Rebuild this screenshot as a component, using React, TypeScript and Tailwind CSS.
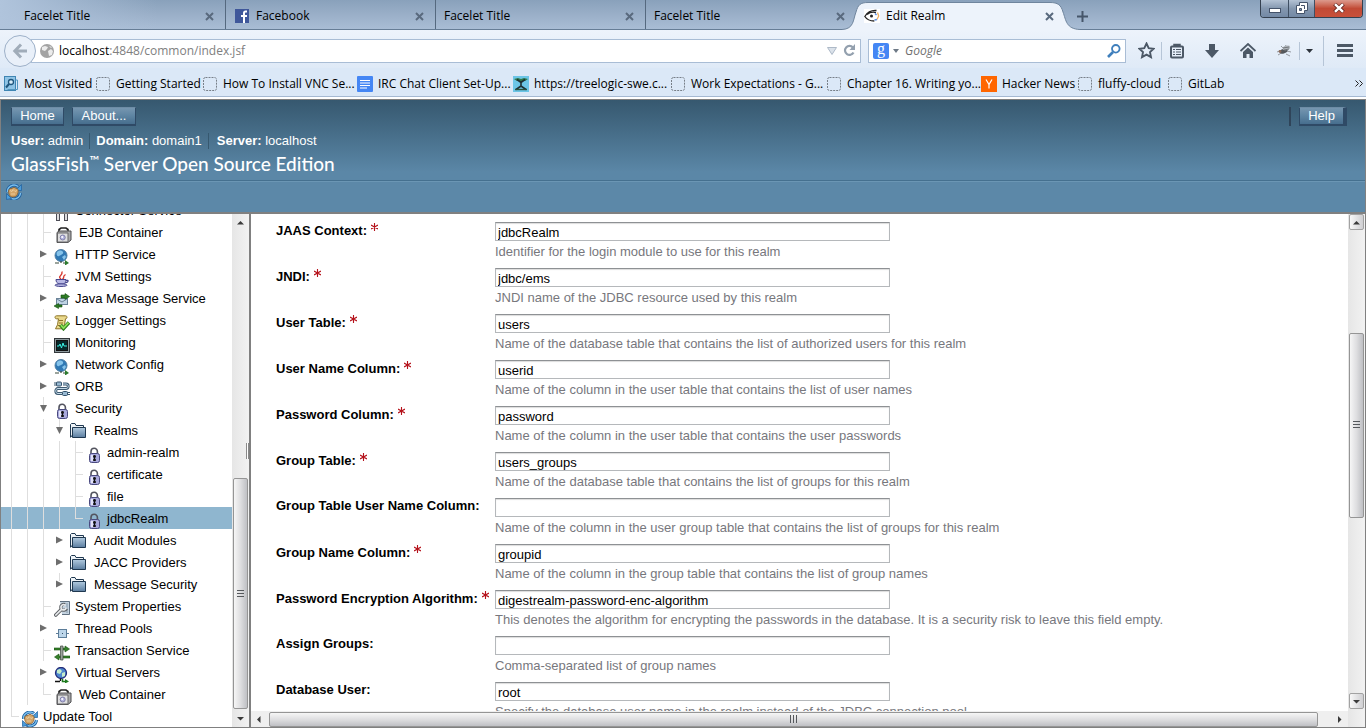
import React from "react";

const UI = "font-['Open_Sans','Noto_Sans',sans-serif]";

function TabClose({ label }: { label: string }) {
  return (
    <button type="button" aria-label={label} className="flex h-4 w-4 items-center justify-center">
      <svg width="9" height="9" viewBox="0 0 9 9" stroke="#596a7e" strokeWidth="2">
        <path d="M1 1l7 7M8 1l-7 7" />
      </svg>
    </button>
  );
}

function BackgroundTab({ title, icon, className }: { title: string; icon?: React.ReactNode; className: string }) {
  return (
    <div className={`flex h-full shrink-0 items-center pt-[3px] ${className}`}>
      {icon}
      <button type="button" className="flex-1 text-left">{title}</button>
      <TabClose label={`Close ${title}`} />
    </div>
  );
}

function GlassFishIcon() {
  return (
    <svg width="16" height="14" viewBox="0 0 16 14" className="shrink-0">
      <rect width="16" height="14" fill="#fff" />
      <path d="M12.500 1.500C7 1 3 4 .8 7.500c2 3 5 4.500 9.500 4.500M3 5.500c3-2.500 6-2.800 9-2" fill="none" stroke="#222" strokeWidth="1.300" />
      <circle cx="7.500" cy="7" r="1.500" fill="#222" />
      <path d="M13.500 3.500l1.200 3.500-1.700 3.500" fill="none" stroke="#f0b064" strokeWidth="1.300" />
      <path d="M11 4.500l1.500 1.500M10.500 11l2.500-.5" stroke="#5a8ee0" strokeWidth="1.500" />
    </svg>
  );
}

function TabStrip() {
  return (
    <div className="flex h-[30px] shrink-0 items-stretch border-b border-[#667d96] bg-linear-to-b from-[#89a1bb] via-[#9aafc8] to-[#a9bdd5]">
      <BackgroundTab title="Facelet Title" className="w-[226px] border-r border-[#55697f] bg-linear-to-r from-[#b0c4dc] to-transparent to-70% pr-2 pl-6" />
      <BackgroundTab
        title="Facebook"
        className="w-[210px] gap-[7px] border-r border-[#55697f] pr-2 pl-[9px]"
        icon={
          <svg width="14" height="14" viewBox="0 0 14 14">
            <rect width="14" height="14" fill="#3f579a" />
            <path d="M12 2.500h-1.500c-1 0-1.500.5-1.500 1.500v10M6 7h6" stroke="#fff" strokeWidth="2" fill="none" />
          </svg>
        }
      />
      <BackgroundTab title="Facelet Title" className="w-[210px] border-r border-[#55697f] pr-2 pl-2" />
      <BackgroundTab title="Facelet Title" className="w-[208px] pr-[6px] pl-2" />
      <div className="relative z-10 flex w-[211px] shrink-0 items-center pt-[3px] pr-2 pl-[10px]">
        <svg width="240" height="31" viewBox="0 0 240 31" className="absolute -left-3 top-0">
          <path d="M0 29.500C12 29 11 20 14 12C16 5 18 2.500 26 2.500H208C216 2.500 219 5 221 12C224 20 224 29 238 29.500V31H0Z" fill="#edf3fb" />
          <path d="M0 29.500C12 29 11 20 14 12C16 5 18 2.500 26 2.500H208C216 2.500 219 5 221 12C224 20 224 29 238 29.500" fill="none" stroke="#6f859d" />
        </svg>
        <div className="relative flex flex-1 items-center gap-[6px]">
          <GlassFishIcon />
          <button type="button" className="flex-1 text-left">Edit Realm</button>
          <TabClose label="Close Edit Realm" />
        </div>
      </div>
      <button type="button" aria-label="New tab" className="ml-3 flex items-center pt-[3px]">
        <svg width="11" height="11" viewBox="0 0 11 11" stroke="#46566a" strokeWidth="2"><path d="M5.500 0v11M0 5.500h11" /></svg>
      </button>
      <div className="mr-[3px] ml-auto flex h-[18px] overflow-hidden rounded-b border border-t-0 border-[#34404f]">
        <button type="button" aria-label="Minimize" className="flex w-7 items-end justify-center border-r border-[#3f4f63] bg-linear-to-b from-[#b3c2d4] via-[#8497af] to-[#7389a5] pb-1">
          <span className="h-[5px] w-3 border border-[#44536a] bg-white" />
        </button>
        <button type="button" aria-label="Restore" className="flex w-[26px] items-center justify-center border-r border-[#3f4f63] bg-linear-to-b from-[#b3c2d4] via-[#8497af] to-[#7389a5] pb-[2px]">
          <svg width="12" height="12" viewBox="0 0 12 12"><path d="M3.500 .5h8v8h-3v3h-8v-8h3z" fill="#fff" stroke="#44536a" /><path d="M3.500 6.500h2v2h-2z" fill="#8497af" stroke="#44536a" /><path d="M5 3.500h3.500V7" fill="none" stroke="#44536a" /></svg>
        </button>
        <button type="button" aria-label="Close window" className="flex w-[47px] items-center justify-center bg-linear-to-b from-[#dc9a8d] via-[#c14a35] to-[#c8503a] pb-[2px]">
          <svg width="12" height="10" viewBox="0 0 12 10"><path d="M1.500 1l9 8M10.500 1l-9 8" stroke="#6b2b24" strokeWidth="4" /><path d="M2 1.200l8 7.600M10 1.200l-8 7.600" stroke="#fff" strokeWidth="2.400" /></svg>
        </button>
      </div>
    </div>
  );
}

function NavBar() {
  return (
    <div className="flex h-[38px] shrink-0 items-center bg-linear-to-b from-[#edf3fb] to-[#dfeaf7] pt-[3px] pl-1">
      <button type="button" aria-label="Back" className="z-10 -mr-[5px] flex h-8 w-8 shrink-0 items-center justify-center rounded-full border border-[#9db0c8] bg-[#e9f0f9]">
        <svg width="16" height="16" viewBox="0 0 16 16" fill="none" stroke="#a0acb9" strokeWidth="3"><path d="M9 1.500L2.800 8L9 14.500M3 8h12" /></svg>
      </button>
      <div className="flex h-6 flex-1 items-center border border-[#a9bdd5] bg-white pr-1 pl-2">
        <svg width="14" height="14" viewBox="0 0 14 14" className="shrink-0">
          <circle cx="7" cy="7" r="7" fill="#a3a3a3" />
          <path d="M2 3l3-1 3 1-1 2-2 2-3-1zM8 7l3-2 2 2-1 4-3 1zM9 2l3 1-1 1z" fill="#ececec" />
        </svg>
        <label htmlFor="address" className="ml-[5px]">localhost</label>
        <input id="address" defaultValue=":4848/common/index.jsf" className="h-5 w-0 flex-1 bg-transparent text-[#808080] outline-none" />
        <svg width="10" height="8" viewBox="0 0 10 8"><path d="M.5 .5h9L5 7.500z" fill="#dbe2ea" stroke="#adb9c7" /></svg>
        <button type="button" aria-label="Reload" className="ml-[6px]">
          <svg width="13" height="13" viewBox="0 0 13 13"><path d="M10.500 8.500a4.500 4.500 0 1 1-.6-5" fill="none" stroke="#93a0ae" strokeWidth="2.200" /><path d="M12 0v6H6.500z" fill="#93a0ae" /></svg>
        </button>
      </div>
      <div className="ml-[7px] flex h-6 w-[258px] shrink-0 items-center border border-[#a9bdd5] bg-white pr-1 pl-1">
        <span className="flex h-4 w-4 shrink-0 items-center justify-center rounded-[2px] bg-[#4486f4] pb-[3px] font-['Liberation_Serif',serif] text-base leading-4 text-white">g</span>
        <svg width="7" height="4" viewBox="0 0 7 4" className="mx-1 shrink-0"><path d="M0 0h6L3 4z" fill="#6d7986" /></svg>
        <input aria-label="Search" placeholder="Google" className="ml-px h-5 w-0 flex-1 bg-transparent placeholder-[#6f6f6f] italic outline-none" />
        <button type="button" aria-label="Go">
          <svg width="14" height="14" viewBox="0 0 14 14" fill="none" stroke="#3f7fbc"><circle cx="8.800" cy="4.800" r="3.800" strokeWidth="1.800" /><path d="M6 8L1 13" strokeWidth="2.600" /></svg>
        </button>
      </div>
      <div className="flex shrink-0 items-center pl-3 text-[#4c5866]">
        <button type="button" aria-label="Bookmark this page">
          <svg width="17" height="17" viewBox="0 0 17 17"><path d="M8.500 1.500l2.200 4.600 5 .6-3.700 3.400 1 5-4.500-2.500-4.500 2.500 1-5L1.300 6.700l5-.6z" fill="none" stroke="currentColor" strokeWidth="1.900" /></svg>
        </button>
        <span className="mx-[6px] h-[18px] w-px bg-[#b6c5d7]" />
        <button type="button" aria-label="Bookmarks menu" className="ml-px">
          <svg width="16" height="16" viewBox="0 0 16 16"><rect x="2" y="3.500" width="12" height="11" rx="1" fill="none" stroke="currentColor" strokeWidth="2" /><path d="M5 3V1.500h6V3" fill="currentColor" stroke="currentColor" strokeWidth="1.500" /><path d="M4 6.500h2M4 9h2M4 11.500h2M7 6.500h5M7 9h5M7 11.500h5" stroke="currentColor" strokeWidth="1.200" /></svg>
        </button>
        <button type="button" aria-label="Downloads" className="ml-5">
          <svg width="14" height="14" viewBox="0 0 14 14"><path d="M4 0h6v6h4L7 14 0 6h4z" fill="currentColor" /></svg>
        </button>
        <button type="button" aria-label="Home page" className="ml-[21px]">
          <svg width="16" height="15" viewBox="0 0 16 15"><path d="M.5 8L8 1l7.500 7" fill="none" stroke="currentColor" strokeWidth="1.800" /><path d="M3 9l5-4.500L13 9v6H9.500v-4h-3v4H3z" fill="currentColor" /></svg>
        </button>
        <button type="button" aria-label="Firebug" className="ml-5">
          <svg width="16" height="13" viewBox="0 0 16 13"><path d="M1 8l5-2M2 11l5-3M5 2l3 3M10 10l4 2M11 7l4 1M9 3l1-2" stroke="#8b8f94" strokeWidth=".9" /><ellipse cx="7.500" cy="7" rx="4" ry="2.300" fill="#54585c" transform="rotate(-20 8 6.500)" /><ellipse cx="10.500" cy="3.800" rx="3.800" ry="2.200" fill="#b0b6bc" transform="rotate(-15 11 4)" /><path d="M7 4l6-1M8 6l5-1" stroke="#5f6367" strokeWidth=".8" /><circle cx="4" cy="7.500" r="1.400" fill="#8a6a5a" /></svg>
        </button>
        <span className="ml-[7px] h-[18px] w-px bg-[#b6c5d7]" />
        <button type="button" aria-label="Firebug options" className="ml-[6px]"><svg width="7" height="4" viewBox="0 0 7 4"><path d="M0 0h7L3.500 4z" fill="#2c333b" /></svg></button>
        <span className="ml-[10px] h-[30px] w-px bg-[#b6c5d7]" />
        <button type="button" aria-label="Open menu" className="mr-[13px] ml-[13px]">
          <svg width="16" height="13" viewBox="0 0 16 13" stroke="currentColor" strokeWidth="3"><path d="M0 1.500h16M0 6.500h16M0 11.500h16" /></svg>
        </button>
      </div>
    </div>
  );
}

const blankIcon = (
  <svg width="16" height="16" viewBox="0 0 16 16"><rect x="1.500" y="1.500" width="13" height="13" rx="2" fill="none" stroke="#777f88" strokeDasharray="2 1" /></svg>
);

const bookmarks: { title: string; width: string; icon: React.ReactNode }[] = [
  {
    title: "Most Visited", width: "w-[92px]",
    icon: <svg width="16" height="16" viewBox="0 0 16 16"><rect x="1.500" y=".5" width="11" height="14" fill="#8fc4e6" stroke="#3f85b3" /><path d="M12.500 4h2v9.500h-10" fill="none" stroke="#5497c0" /><circle cx="8" cy="6" r="2.500" fill="#d9eefa" stroke="#1f567e" strokeWidth="1.300" /><path d="M6 8l-3 3.500" stroke="#1f567e" strokeWidth="2" /></svg>,
  },
  { title: "Getting Started", width: "w-[107px]", icon: blankIcon },
  { title: "How To Install VNC Se...", width: "w-[155px]", icon: blankIcon },
  {
    title: "IRC Chat Client Set-Up...", width: "w-[156px]",
    icon: <svg width="16" height="16" viewBox="0 0 16 16"><rect width="16" height="16" rx="1" fill="#4486f4" /><path d="M3 4.500h10M3 7h10M3 9.500h10M3 12h7" stroke="#fff" strokeWidth="1.200" /></svg>,
  },
  {
    title: "https://treelogic-swe.c...", width: "w-[157px]",
    icon: <svg width="16" height="16" viewBox="0 0 16 16"><rect width="16" height="16" fill="#6cc5e6" /><path d="M1 3l4-1 3 1 3-1 4 1-3 2H4z" fill="#2f7a4a" /><path d="M4 3.500l4 3 4-3M8 5v6M3 13.500l5-3.500 5 3.500" fill="none" stroke="#1f2f33" strokeWidth="1.600" /><path d="M2 13.500h12" stroke="#27503c" strokeWidth="1.400" /></svg>,
  },
  { title: "Work Expectations - G...", width: "w-[156px]", icon: blankIcon },
  { title: "Chapter 16. Writing yo...", width: "w-[155px]", icon: blankIcon },
  {
    title: "Hacker News", width: "w-[96px]",
    icon: <svg width="16" height="16" viewBox="0 0 16 16"><rect width="16" height="16" fill="#ff6600" /><path d="M5 3.500l3 5 3-5M8 8.500v4" fill="none" stroke="#fff" strokeWidth="1.200" /></svg>,
  },
  { title: "fluffy-cloud", width: "w-[90px]", icon: blankIcon },
  { title: "GitLab", width: "w-[90px]", icon: blankIcon },
];

function BookmarksBar() {
  return (
    <nav className="flex h-[29px] shrink-0 items-center border-b border-[#a5b9d2] bg-[#dbe8f7] pt-[3px] pl-[3px]">
      {bookmarks.map((b) => (
        <a key={b.title} href="#bookmark" className={`flex shrink-0 items-center gap-[5px] whitespace-nowrap ${b.width}`}>
          <span className="shrink-0">{b.icon}</span>
          {b.title}
        </a>
      ))}
      <button type="button" aria-label="More bookmarks" className="mr-[3px] ml-auto">
        <svg width="8" height="7" viewBox="0 0 8 7" fill="none" stroke="#222"><path d="M.5 .5l3 3-3 3M4.500 .5l3 3-3 3" /></svg>
      </button>
    </nav>
  );
}

function UpdateIcon() {
  return (
    <svg width="16" height="16" viewBox="0 0 16 16">
      <path d="M1.500 8A6.500 6.500 0 0 1 12 2.500M14.500 9A6.500 6.500 0 0 1 4 13.500" fill="none" stroke="#1d5f9f" strokeWidth="3" />
      <path d="M1.500 8A6.500 6.500 0 0 1 12 2.500M14.500 9A6.500 6.500 0 0 1 4 13.500" fill="none" stroke="#7cc0ee" strokeWidth="1.400" />
      <path d="M15.500 .5v6h-6zM.5 15.500v-6l5 5z" fill="#4b9bd8" stroke="#1d5f9f" strokeWidth=".7" />
      <path d="M2.500 7c.5-2 2-3 3.500-2.500 1-1.500 3-1.500 4 0 2 0 2.500 1.500 2 4s-2 4.500-5 4.500-4-2-4.500-6z" fill="#d4a568" stroke="#87602f" strokeWidth=".8" />
      <path d="M4 6.500l2 1 1-2 2 2 2-1M5 10h4" fill="none" stroke="#efd3a4" strokeWidth=".8" />
    </svg>
  );
}

const mastButton = "h-[19px] border border-b-2 border-[#2f4a66] border-t-[#6e8ca5] bg-linear-to-b from-[#7696b0] via-[#5d84a2] to-[#476e8e] text-[13px] leading-4 text-white";

function Masthead() {
  return (
    <header className="shrink-0 border-b-2 border-[#808080] bg-[#5c88a8] text-[13px] leading-4 text-white">
      <div className="flex h-[81px] flex-col border-b border-[#45708f] bg-linear-to-b from-[#36586f] via-[#4a728e] via-50% to-[#5b87a7] to-90% pt-[7px] pl-[10px]">
        <div className="flex items-start gap-2">
          <button type="button" className={`${mastButton} w-[53px]`}>Home</button>
          <button type="button" className={`${mastButton} w-16`}>About...</button>
          <div className="mr-[18px] ml-auto flex items-start gap-2">
            <span className="h-[19px] w-[2px] bg-[#2f4459]" />
            <button type="button" className={`${mastButton} w-12 border-r-4`}>Help</button>
          </div>
        </div>
        <div className="mt-[7px] flex">
          <span className="pr-[6px]"><b>User:</b> admin</span>
          <span className="border-l border-[#36586f] px-[6px]"><b>Domain:</b> domain1</span>
          <span className="border-l border-[#36586f] px-2"><b>Server:</b> localhost</span>
        </div>
        <h1 className="mt-[3px] font-[Lato,'Open_Sans',sans-serif] text-[19px] leading-6 font-medium whitespace-nowrap">
          GlassFish<sup className="-top-[6px] text-[13px] leading-none">™</sup> Server Open Source Edition
        </h1>
      </div>
      <div className="flex h-[31px] items-start border-t border-[#6b96b4] pt-[2px] pl-[5px]">
        <button type="button" aria-label="Updates available"><UpdateIcon /></button>
      </div>
    </header>
  );
}

const GlobeIcon = () => (
  <svg width="16" height="16" viewBox="0 0 16 16">
    <circle cx="7" cy="6.500" r="6" fill="#2f78b4" stroke="#4f7ea3" />
    <path d="M3 3c2-2 5-2 6 0S7 6 5 7 2 5 3 3zM8 8l3-2 1 2-2 3z" fill="#86c3ea" />
    <path d="M1 14h4M9 14h3M7 12v2" stroke="#3b4a3b" strokeWidth="1.200" /><path d="M11 11l4 3-4 2.500z" fill="#2d7a2d" />
  </svg>
);
const LockIcon = () => (
  <svg width="16" height="16" viewBox="0 0 16 16">
    <path d="M5 8V4.500a3.200 3.200 0 0 1 6.400 0V8" fill="none" stroke="#53545f" strokeWidth="1.600" />
    <rect x="3.500" y="6.500" width="10" height="9" rx="2" fill="#a9a9dc" stroke="#4a4a80" />
    <path d="M5 8h2v6H5z" fill="#e3e3f7" /><circle cx="8.500" cy="9.500" r="1.400" fill="#111" /><path d="M8.500 9v5M7 13h3" stroke="#111" strokeWidth="1.300" />
  </svg>
);
const FolderIcon = () => (
  <svg width="16" height="16" viewBox="0 0 16 16">
    <defs><linearGradient id="folder" x2="0" y2="1"><stop stopColor="#b1cadf" /><stop offset="1" stopColor="#5b7d9f" /></linearGradient></defs>
    <path d="M.5 14V1.500L1.500 .5h3.500l1 2h7.500v2" fill="#eef3f7" stroke="#1f3850" />
    <path d="M.5 14.500L2.500 12M2.500 14.500v-10h13v10z" fill="url(#folder)" stroke="#1f3850" />
  </svg>
);
const ContainerIcon = () => (
  <svg width="16" height="16" viewBox="0 0 16 16">
    <path d="M3 5V2.500L5 1h5l2 1.500V5" fill="none" stroke="#222" strokeWidth="1.600" />
    <path d="M1 5.500l2-1.500h12v9l-3 2.500H1z" fill="#a9a9ab" stroke="#4c4c4e" /><path d="M1.500 6h10.500v9H1.500z" fill="#dededf" stroke="#68686a" />
    <circle cx="6.700" cy="10.500" r="2.500" fill="#b5b5e0" stroke="#8080a8" /><circle cx="6.200" cy="10" r="1" fill="#fff" />
  </svg>
);
const ConnectorIcon = () => (
  <svg width="16" height="16" viewBox="0 0 16 16">
    <path d="M2 9V4l3-3h6l3 3v5" fill="none" stroke="#4c4c55" strokeWidth="2" />
    <rect x="2.500" y="8.500" width="3" height="7" fill="#dededf" stroke="#4c4c55" /><rect x="10.500" y="8.500" width="3" height="7" fill="#dededf" stroke="#4c4c55" />
  </svg>
);
const JavaIcon = () => (
  <svg width="16" height="16" viewBox="0 0 16 16">
    <path d="M7 8c-4-3 2-3 1-7.500M8.500 8c3-2-1-2 3-4.500" fill="none" stroke="#d8362b" strokeWidth="1.400" />
    <path d="M2 8.500h10c0 3-1 4-3 4.500H5c-2-1-3-2-3-4.500z" fill="#b7b7e4" stroke="#45458c" /><path d="M12 9.500c3-1 3 2-1 2.500" fill="none" stroke="#45458c" strokeWidth="1.200" /><ellipse cx="7" cy="14.200" rx="6" ry="1.300" fill="#b7b7e4" stroke="#45458c" />
  </svg>
);
const MessageIcon = () => (
  <svg width="16" height="16" viewBox="0 0 16 16">
    <rect x="2.500" y="5.500" width="11" height="6" fill="#bfd3e4" stroke="#6c8499" /><path d="M3 6l5 3 5-3" fill="none" stroke="#6c8499" />
    <path d="M7 2h4V.5L15.500 3.500 11 6.500V5H7z" fill="#2e7a25" stroke="#15520f" strokeWidth=".6" /><path d="M8 12H4.500v-1.500L0 13l4.500 2.500V14H8z" fill="#2e7a25" stroke="#15520f" strokeWidth=".6" />
  </svg>
);
const LoggerIcon = () => (
  <svg width="16" height="16" viewBox="0 0 16 16">
    <path d="M2.500 .8h9c2 0 2 3 0 3l-1 6-1 4h-8l2-4 1-6h-2c-2 0-2-3 0-3z" fill="#ead98c" stroke="#8c7427" /><path d="M5 5.500h4M5 8h4M4 10.500h4" stroke="#8c7427" />
    <path d="M6.500 10l3 3.500L15 7.500" fill="none" stroke="#2d7a1d" strokeWidth="3.600" /><path d="M6.800 10.200l2.700 3 5-5.500" fill="none" stroke="#8be057" strokeWidth="1.800" />
  </svg>
);
const MonitorIcon = () => (
  <svg width="16" height="16" viewBox="0 0 16 16">
    <rect x=".5" y="1.500" width="15" height="14" fill="#8f9b9f" stroke="#33383b" /><rect x="2.500" y="3.500" width="11" height="10" fill="#06292b" stroke="#111" /><path d="M3 9h2l1-2 1.500 4L9 6l1 3h3" fill="none" stroke="#3af1e4" />
  </svg>
);
const OrbIcon = () => (
  <svg width="16" height="16" viewBox="0 0 16 16">
    <path d="M9 3h3c3 0 3 4.500 0 4.500H4c-3 0-3 5 0 5h4" fill="none" stroke="#3e5b72" strokeWidth="2.800" /><path d="M9 3h3c3 0 3 4.500 0 4.500H4c-3 0-3 5 0 5h4" fill="none" stroke="#c4d9e8" />
    <path d="M0 2h3M0 4h3M13 11.500h3M13 13.500h3" stroke="#35526a" /><rect x="2.500" y="1" width="5" height="4" rx="1" fill="#98b9d2" stroke="#35526a" /><rect x="8.500" y="10.500" width="5" height="4" rx="1" fill="#98b9d2" stroke="#35526a" />
  </svg>
);
const WrenchIcon = () => (
  <svg width="16" height="16" viewBox="0 0 16 16">
    <path d="M6 .5h9.500v13H8" fill="#c4d3e0" stroke="#5f6f7f" /><path d="M13 2v10" stroke="#8698a8" />
    <path d="M1.800 14L7 8.800" stroke="#5f6367" strokeWidth="3.600" strokeLinecap="round" /><path d="M11 3.500a3 3 0 1 0 1.500 4" fill="none" stroke="#5f6367" strokeWidth="3.200" /><path d="M1.800 14L7.500 8.300M10.800 4a2.600 2.600 0 1 0 1.200 3.200" fill="none" stroke="#e9ebed" strokeWidth="1.700" strokeLinecap="round" />
  </svg>
);
const ThreadIcon = () => (
  <svg width="16" height="16" viewBox="0 0 16 16"><path d="M2 10.500h13" stroke="#5c7d99" /><rect x="4.500" y="6.500" width="8" height="8" fill="#bdd6ea" stroke="#5c7d99" /><path d="M8 10h1v1H8z" fill="#35526a" /></svg>
);
const TransactionIcon = () => (
  <svg width="16" height="16" viewBox="0 0 16 16">
    <path d="M0 3h11V1l4.500 3L11 7V5H0zM16 11H5V9L.5 12 5 15v-2h11z" fill="#37812c" stroke="#15520f" strokeWidth=".6" /><path d="M6.500 1H9v14H6.500z" fill="#9aa29a" stroke="#3e453e" strokeWidth=".7" />
  </svg>
);
const ServerIcon = () => (
  <svg width="16" height="16" viewBox="0 0 16 16">
    <circle cx="7" cy="6" r="5.500" fill="#4e87cf" stroke="#242d7a" strokeWidth="1.300" /><path d="M3 3l3-1 2 2-2 3-3-1zM8 6l3-1v4l-3 1z" fill="#c5edcb" />
    <path d="M6.500 11.500V14M1 14.500h5" stroke="#111" strokeWidth="1.400" /><path d="M8.500 12v2.500h3" fill="none" stroke="#1d7a1d" strokeWidth="1.500" /><path d="M11 12l4 2.500-4 2z" fill="#1d7a1d" />
  </svg>
);

type Cell = "line" | "tee" | "end" | "right" | "down" | "rightTop";

function Guide({ kind }: { kind: Cell }) {
  const stroke = "#dedede";
  return (
    <svg width="16" height="22" viewBox="0 0 16 22" className="shrink-0">
      {(kind === "line" || kind === "tee") && <path d="M8.500 0v22" stroke={stroke} />}
      {kind === "end" && <path d="M8.500 0v11.500" stroke={stroke} />}
      {(kind === "tee" || kind === "end") && <path d="M8 11.500h9" stroke={stroke} />}
      {(kind === "down" || kind === "rightTop") && <path d="M8.500 0v8" stroke={stroke} />}
      {(kind === "right" || kind === "rightTop") && <path d="M5 7.500l7 3.500-7 3.500z" fill="#6e6e6e" />}
      {kind === "down" && <path d="M5 8h7l-3.500 7z" fill="#6e6e6e" />}
    </svg>
  );
}

interface Node { text: string; cells: Cell[]; Icon: React.ComponentType; box?: string; selected?: boolean }
const L: Cell = "line";
const wide = "w-7 pl-[5px]";
const folder = "w-[27px] pl-[3px] pb-[2px]";

const tree: Node[] = [
  { text: "Connector Service", cells: [L, L, "tee"], Icon: ConnectorIcon },
  { text: "EJB Container", cells: [L, L, "tee"], Icon: ContainerIcon, box: wide },
  { text: "HTTP Service", cells: [L, L, "right"], Icon: GlobeIcon },
  { text: "JVM Settings", cells: [L, L, "tee"], Icon: JavaIcon },
  { text: "Java Message Service", cells: [L, L, "right"], Icon: MessageIcon },
  { text: "Logger Settings", cells: [L, L, "tee"], Icon: LoggerIcon },
  { text: "Monitoring", cells: [L, L, "tee"], Icon: MonitorIcon },
  { text: "Network Config", cells: [L, L, "right"], Icon: GlobeIcon },
  { text: "ORB", cells: [L, L, "right"], Icon: OrbIcon },
  { text: "Security", cells: [L, L, "down"], Icon: LockIcon },
  { text: "Realms", cells: [L, L, L, "down"], Icon: FolderIcon, box: folder },
  { text: "admin-realm", cells: [L, L, L, L, "tee"], Icon: LockIcon },
  { text: "certificate", cells: [L, L, L, L, "tee"], Icon: LockIcon },
  { text: "file", cells: [L, L, L, L, "tee"], Icon: LockIcon },
  { text: "jdbcRealm", cells: [L, L, L, L, "end"], Icon: LockIcon, selected: true },
  { text: "Audit Modules", cells: [L, L, L, "right"], Icon: FolderIcon, box: folder },
  { text: "JACC Providers", cells: [L, L, L, "right"], Icon: FolderIcon, box: folder },
  { text: "Message Security", cells: [L, L, L, "rightTop"], Icon: FolderIcon, box: folder },
  { text: "System Properties", cells: [L, L, "tee"], Icon: WrenchIcon },
  { text: "Thread Pools", cells: [L, L, "right"], Icon: ThreadIcon },
  { text: "Transaction Service", cells: [L, L, "tee"], Icon: TransactionIcon },
  { text: "Virtual Servers", cells: [L, L, "right"], Icon: ServerIcon },
  { text: "Web Container", cells: [L, L, "end"], Icon: ContainerIcon, box: wide },
  { text: "Update Tool", cells: ["end"], Icon: UpdateIcon },
];

function Tree() {
  return (
    <ul className="-mt-[15px] min-w-0 flex-1 text-[13px] leading-6">
      {tree.map((n) => (
        <li key={n.text} className={`flex h-[22px] pl-[2px] ${n.selected ? "bg-[#8fb6cf]" : ""}`}>
          {n.cells.map((c, i) => <Guide key={i} kind={c} />)}
          <span className={`flex shrink-0 items-end ${n.box ?? "w-6 pl-[3px]"}`}><n.Icon /></span>
          <a href="#node" className="whitespace-nowrap text-black">{n.text}</a>
        </li>
      ))}
    </ul>
  );
}

function Arrow({ d }: { d: string }) {
  return <svg width="7" height="7" viewBox="0 0 7 7"><path d={d} fill="#3a3a3a" /></svg>;
}
const UP = "M0 5.500h7L3.500 2z";
const DOWN = "M0 2h7L3.500 5.500z";

function Grip({ horizontal }: { horizontal?: boolean }) {
  return (
    <svg width="8" height="8" viewBox="0 0 8 8" stroke="#55585c">
      <path d={horizontal ? "M.5 0v8M3.500 0v8M6.500 0v8" : "M0 .5h7M0 3.500h7M0 6.500h7"} />
    </svg>
  );
}

interface Field { label: string; value: string; help: string; required?: boolean }
const fields: Field[] = [
  { label: "JAAS Context:", value: "jdbcRealm", help: "Identifier for the login module to use for this realm", required: true },
  { label: "JNDI:", value: "jdbc/ems", help: "JNDI name of the JDBC resource used by this realm", required: true },
  { label: "User Table:", value: "users", help: "Name of the database table that contains the list of authorized users for this realm", required: true },
  { label: "User Name Column:", value: "userid", help: "Name of the column in the user table that contains the list of user names", required: true },
  { label: "Password Column:", value: "password", help: "Name of the column in the user table that contains the user passwords", required: true },
  { label: "Group Table:", value: "users_groups", help: "Name of the database table that contains the list of groups for this realm", required: true },
  { label: "Group Table User Name Column:", value: "", help: "Name of the column in the user group table that contains the list of groups for this realm" },
  { label: "Group Name Column:", value: "groupid", help: "Name of the column in the group table that contains the list of group names", required: true },
  { label: "Password Encryption Algorithm:", value: "digestrealm-password-enc-algorithm", help: "This denotes the algorithm for encrypting the passwords in the database. It is a security risk to leave this field empty.", required: true },
  { label: "Assign Groups:", value: "", help: "Comma-separated list of group names" },
  { label: "Database User:", value: "root", help: "Specify the database user name in the realm instead of the JDBC connection pool" },
];

function RealmForm() {
  return (
    <form className="min-h-0 flex-1 overflow-hidden bg-white pt-2 pl-[25px] text-[13px] leading-4">
      {fields.map((f, i) => (
        <div key={f.label} className="flex h-[46px]">
          <label htmlFor={`field-${i}`} className={`flex w-[219px] shrink-0 font-bold whitespace-nowrap text-black ${f.required ? "pt-px" : ""}`}>
            {f.label}
            {f.required && (
              <svg width="7" height="8" viewBox="0 0 7 8" className="ml-1 shrink-0" stroke="#b5121b" strokeWidth="1.100"><path d="M3.500 0v8M0 2l7 4M7 2L0 6" /></svg>
            )}
          </label>
          <div>
            <input id={`field-${i}`} defaultValue={f.value} className="block h-[19px] w-[395px] border border-[#b5b8bb] border-t-[#8e9194] bg-white px-[2px] pt-px text-black shadow-[inset_0_1px_1px_#dcdcdc] outline-none" />
            <p className="mt-[3px] whitespace-nowrap text-[#77777d]">{f.help}</p>
          </div>
        </div>
      ))}
    </form>
  );
}

export default function App() {
  return (
    <div className="flex h-screen flex-col overflow-hidden bg-white font-['Liberation_Sans',Arial,sans-serif]">
      <div className={`${UI} text-[12px] leading-4 text-black`}>
        <TabStrip />
        <NavBar />
        <BookmarksBar />
      </div>
      <div className="mt-[2px] flex min-h-0 flex-1 flex-col border border-[#808080]">
        <Masthead />
        <div className="flex min-h-0 flex-1">
          <aside className="relative flex w-[250px] shrink-0 overflow-hidden border-r-2 border-[#808080] bg-white">
            <Tree />
            <div className="flex w-[17px] shrink-0 flex-col items-center bg-linear-to-r from-[#e6e6e6] to-[#f2f2f2]">
              <span className="flex h-[17px] items-center"><Arrow d={UP} /></span>
              <span className="h-[247px]" />
              <span className="flex w-[15px] flex-1 items-center justify-center rounded-[2px] border border-[#959595] bg-linear-to-r from-[#f6f6f6] via-[#dedee0] to-[#bfc0c4]"><Grip /></span>
              <span className="flex h-[18px] items-center"><Arrow d={DOWN} /></span>
            </div>
            <span className="absolute top-[229px] right-0 h-4 w-[3px] border-x border-[#8a8a8a] bg-white" />
          </aside>
          <main className="flex min-w-0 flex-1">
            <div className="flex min-w-0 flex-1 flex-col">
              <RealmForm />
              <div className="flex h-4 shrink-0 items-center bg-[#efefef]">
                <span className="flex w-[18px] justify-center pr-1"><Arrow d="M5.500 0v7L2 3.500z" /></span>
                <span className="flex h-[15px] flex-1 items-center justify-center rounded-[2px] border border-[#959595] bg-linear-to-b from-[#f6f6f6] via-[#dedee0] to-[#bfc0c4]"><Grip horizontal /></span>
                <span className="flex w-[30px] justify-center pl-3"><Arrow d="M2 0v7l3.500-3.500z" /></span>
              </div>
            </div>
            <div className="flex w-[17px] shrink-0 flex-col items-center bg-linear-to-r from-[#e6e6e6] to-[#f2f2f2] pb-[18px]">
              <span className="flex h-4 w-[15px] items-center justify-center rounded-[2px] border border-[#a2a2a2] bg-linear-to-r from-[#f8f8f8] to-[#cfcfd2]"><Arrow d={UP} /></span>
              <span className="flex-[103]" />
              <span className="flex w-[15px] flex-[184] items-center justify-center rounded-[2px] border border-[#959595] bg-linear-to-r from-[#f6f6f6] via-[#dedee0] to-[#bfc0c4]"><Grip /></span>
              <span className="flex-[176]" />
              <span className="flex h-4 w-[15px] items-center justify-center rounded-[2px] border border-[#a2a2a2] bg-linear-to-r from-[#f8f8f8] to-[#cfcfd2]"><Arrow d={DOWN} /></span>
            </div>
          </main>
        </div>
      </div>
    </div>
  );
}
